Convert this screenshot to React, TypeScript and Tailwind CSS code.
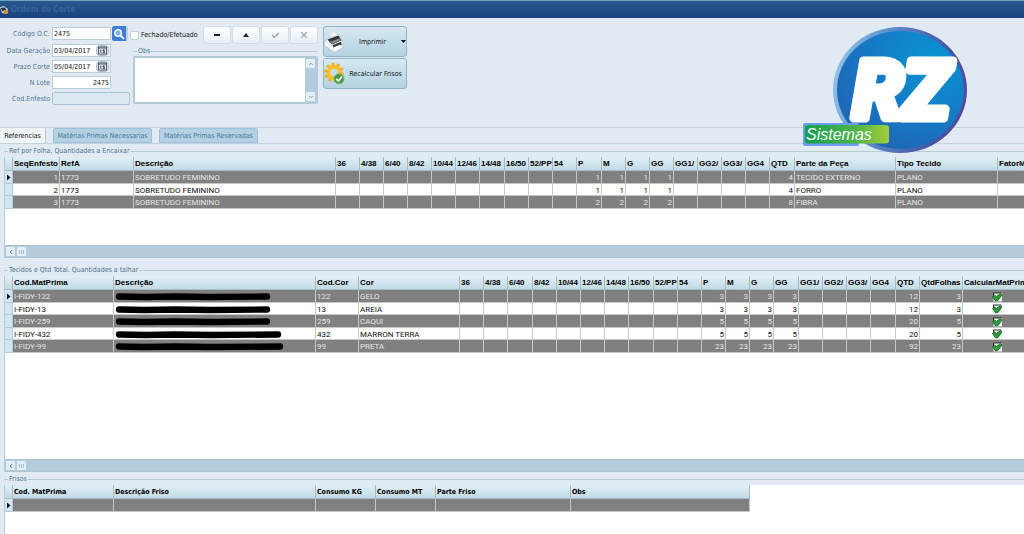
import type { ReactNode } from 'react';
import { Check, ChevronDown, ChevronLeft, ChevronUp, X } from 'lucide-react';

type Column = { label: string; width: number; align?: 'right' | 'center' };
type Cell = ReactNode;

const sizes = ['36', '4/38', '6/40', '8/42', '10/44', '12/46', '14/48', '16/50', '52/PP', '54'];
const letterSizes = ['P', 'M', 'G', 'GG', 'GG1/', 'GG2/', 'GG3/', 'GG4'];

const sizeColumns = (wide: string[]): Column[] =>
  [...sizes, ...letterSizes].map((label) => ({
    label,
    width: wide.includes(label) ? 25 : 24,
    align: 'right',
  }));

const refColumns: Column[] = [
  { label: 'SeqEnfesto', width: 47, align: 'right' },
  { label: 'RefA', width: 74 },
  { label: 'Descrição', width: 202 },
  ...sizeColumns(['14/48', 'P']),
  { label: 'QTD', width: 25, align: 'right' },
  { label: 'Parte da Peça', width: 101 },
  { label: 'Tipo Tecido', width: 102 },
  { label: 'FatorM', width: 70 },
];

const fabricColumns: Column[] = [
  { label: 'Cod.MatPrima', width: 101 },
  { label: 'Descrição', width: 202 },
  { label: 'Cod.Cor', width: 43 },
  { label: 'Cor', width: 101 },
  ...sizeColumns(['6/40', '16/50', 'GG', 'GG4']),
  { label: 'QTD', width: 24, align: 'right' },
  { label: 'QtdFolhas', width: 43, align: 'right' },
  { label: 'CalcularMatPrim', width: 70, align: 'center' },
];

const friezeColumns: Column[] = [
  { label: 'Cod. MatPrima', width: 101 },
  { label: 'Descrição Friso', width: 202 },
  { label: 'Consumo KG', width: 60 },
  { label: 'Consumo MT', width: 60 },
  { label: 'Parte Friso', width: 135 },
  { label: 'Obs', width: 179 },
];

const blank = (n: number): Cell[] => Array(n).fill('');

const refRows: Cell[][] = [
  ['1', '1773', 'SOBRETUDO FEMININO', ...blank(10), '1', '1', '1', '1', ...blank(4), '4', 'TECIDO EXTERNO', 'PLANO', ''],
  ['2', '1773', 'SOBRETUDO FEMININO', ...blank(10), '1', '1', '1', '1', ...blank(4), '4', 'FORRO', 'PLANO', ''],
  ['3', '1773', 'SOBRETUDO FEMININO', ...blank(10), '2', '2', '2', '2', ...blank(4), '8', 'FIBRA', 'PLANO', ''],
];

const fabrics = [
  { code: 'I-FIDY-122', bar: 156, colorCode: '122', color: 'GELO', each: '3', total: '12' },
  { code: 'I-FIDY-13', bar: 156, colorCode: '13', color: 'AREIA', each: '3', total: '12' },
  { code: 'I-FIDY-259', bar: 156, colorCode: '259', color: 'CAQUI', each: '5', total: '20' },
  { code: 'I-FIDY-432', bar: 167, colorCode: '432', color: 'MARRON TERRA', each: '5', total: '20' },
  { code: 'I-FIDY-99', bar: 169, colorCode: '99', color: 'PRETA', each: '23', total: '92' },
];

function Redaction({ width }: { width: number }) {
  const end = width - 4;
  return (
    <svg width={width} height="9" className="block" aria-hidden="true">
      <path
        d={`M4 4.5 L30 5 L60 4.5 L95 5 L${end} 4.5`}
        fill="none"
        stroke="#000"
        strokeWidth="6.4"
        strokeLinecap="round"
      />
    </svg>
  );
}

function GreenCheck() {
  return (
    <svg width="11" height="10" viewBox="0 0 11 10" className="mx-auto block" aria-hidden="true">
      <path d="M1.5 1h8.500v8.500h-8.500z" fill="#e9f2e9" />
      <path d="M1 1h8.500M1.500 1v4" stroke="#333" />
      <path d="M0.500 4.500 2.600 3 4.400 4.400 8.400 1.600 10 3 6 8.400 3.600 9z" fill="#2f9a3c" stroke="#14601e" strokeWidth="0.8" />
    </svg>
  );
}

const fabricRows: Cell[][] = fabrics.map((f) => [
  f.code,
  <Redaction key="bar" width={f.bar} />,
  f.colorCode,
  f.color,
  ...blank(10),
  f.each,
  f.each,
  f.each,
  f.each,
  ...blank(4),
  f.total,
  f.each,
  <GreenCheck key="check" />,
]);

const alignClass = { left: '', right: 'text-right', center: 'text-center' };

type GridProps = { columns: Column[]; rows: Cell[][]; heading?: string };

function Grid({ columns, rows, heading = 'font-["Liberation_Sans",sans-serif] text-[8px]' }: GridProps) {
  const total = columns.reduce((sum, c) => sum + c.width, 8);

  return (
    <table className="table-fixed border-collapse" style={{ width: total }}>
      <colgroup>
        <col style={{ width: 8 }} />
        {columns.map((c) => (
          <col key={c.label} style={{ width: c.width }} />
        ))}
      </colgroup>
      <thead>
        <tr className={`h-[14px] bg-linear-to-b from-[#e0eff5] to-[#c0d9e4] leading-[12px] text-black ${heading}`}>
          <th className="p-0 shadow-[inset_-1px_-1px_#a5bcc8]" />
          {columns.map((c) => (
            <th
              key={c.label}
              className="overflow-hidden whitespace-nowrap p-0 pl-px text-left font-bold shadow-[inset_-1px_-1px_#a5bcc8]"
            >
              {c.label}
            </th>
          ))}
        </tr>
      </thead>
      <tbody className="font-[Roboto,sans-serif] text-[8px] leading-[11px]">
        {rows.map((row, i) => (
          <tr
            key={i}
            className="h-[12px] odd:h-[13px] odd:bg-[#808080] odd:text-[#e4e4e4] even:bg-white even:text-[#111]"
          >
            <td className="bg-[#d3e5ee] p-0 shadow-[inset_-1px_-1px_#b4cad5]">
              {i === 0 && (
                <svg width="7" height="7" viewBox="0 0 7 7" className="block" aria-hidden="true">
                  <path d="M2 0.5 5.5 3.5 2 6.5z" fill="#0a1a2c" />
                </svg>
              )}
            </td>
            {row.map((cell, j) => (
              <td
                key={j}
                className={`overflow-hidden whitespace-nowrap p-0 px-px pr-[2px] shadow-[inset_-1px_-1px_#c8c8c8] ${alignClass[columns[j].align ?? 'left']}`}
              >
                {cell}
              </td>
            ))}
          </tr>
        ))}
      </tbody>
    </table>
  );
}

function HorizontalScroll() {
  return (
    <div className="flex h-[13px] items-center border-y border-[#a9c3d2] bg-[#b3cbdc]">
      <button aria-label="Rolar para a esquerda" className="flex h-[11px] w-[11px] items-center justify-center rounded-xs border border-[#b5cddb] bg-[#e2eff6] text-[#466a85]">
        <ChevronLeft size={6} strokeWidth={4} />
      </button>
      <button aria-label="Barra de rolagem" className="flex h-[11px] w-[11px] items-center justify-center gap-px rounded-xs border border-[#b5cddb] bg-[#e2eff6]">
        <span className="h-1 w-px bg-[#a9bfcd]" />
        <span className="h-1 w-px bg-[#a9bfcd]" />
        <span className="h-1 w-px bg-[#a9bfcd]" />
      </button>
    </div>
  );
}

function Group({ title, className, children }: { title: string; className?: string; children: ReactNode }) {
  return (
    <section className={`flex flex-col pl-1 ${className ?? ''}`}>
      <div className="flex h-3 items-center gap-px text-[#4f7394]">
        <span className="h-px w-1 bg-[#b5cbd8]" />
        <h2 className="leading-[12px]">{title}</h2>
        <span className="h-px flex-1 bg-[#b5cbd8]" />
      </div>
      <div className="flex flex-1 flex-col overflow-hidden border-l border-[#b5cbd8] bg-white">{children}</div>
    </section>
  );
}

function CalendarIcon() {
  return (
    <svg width="13" height="11" viewBox="0 0 13 11" aria-hidden="true">
      <rect x="0.5" y="0.5" width="12" height="10" rx="3" fill="#dce6ef" stroke="#aabbca" />
      <rect x="2.5" y="2" width="8" height="7" fill="#f4f4f8" stroke="#50586e" />
      <path d="M3 2.5h7.5v1H3z" fill="#50586e" />
      <path d="M4.8 4.5v3.5M9 4.8H7v1.4h1.6v1.4H6.8" fill="none" stroke="#2d3448" strokeWidth="0.9" />
    </svg>
  );
}

function PrinterIcon() {
  return (
    <svg width="20" height="22" viewBox="0 0 20 22" aria-hidden="true">
      <path d="M5 3.500 11 0.800 14.500 5 8 8.500z" fill="#fafafa" stroke="#c4c9cc" strokeWidth="0.6" />
      <path d="M0.800 10.500 4 7.500 15 3.500 19.300 12 18.800 17 10.500 21.500 1.500 15z" fill="#eceeef" stroke="#b4b9bc" strokeWidth="0.6" />
      <path d="M3.500 8.500 14.500 4.500 17.500 9.500 8 13.500z" fill="#303334" />
      <path d="M6 10.800 15.500 7.200 16.800 9.400 8.200 12.800z" fill="#85898b" />
      <path d="M8.500 14.300 17 10.800 17.800 13.800 10 17.300z" fill="#3b3e3f" />
      <path d="M9.500 16.500 16 13.800 17.600 16.800 11.500 20z" fill="#fff" />
      <path d="M1 11 7 14 9.500 20 1.500 14.500z" fill="#fbfbfb" />
    </svg>
  );
}

function GearIcon() {
  return (
    <svg width="21" height="23" viewBox="0 0 21 23" aria-hidden="true">
      <circle cx="10" cy="10.5" r="8.3" fill="none" stroke="#f4a91c" strokeWidth="3" strokeDasharray="2.9 2.31" />
      <circle cx="10" cy="10.5" r="5.7" fill="none" stroke="#fbbd29" strokeWidth="4" />
      <circle cx="15" cy="16.8" r="5.2" fill="#4c9a42" stroke="#8fc383" strokeWidth="0.8" />
      <path d="M12.2 16.8 14.4 19 18 14.5" fill="none" stroke="#fff" strokeWidth="1.7" />
    </svg>
  );
}

function Logo() {
  return (
    <svg width="166" height="128" viewBox="0 0 166 128" className="absolute top-[26px] right-[56px]" role="img" aria-label="RZ Sistemas">
      <defs>
        <linearGradient id="ring" x1="0" y1="0.4" x2="1" y2="0.6">
          <stop offset="0" stopColor="#8dc3ea" />
          <stop offset="0.35" stopColor="#5b8cc9" />
          <stop offset="0.8" stopColor="#4753a6" />
          <stop offset="1" stopColor="#54489b" />
        </linearGradient>
        <radialGradient id="disc" cx="0.75" cy="0.25" r="0.8">
          <stop offset="0" stopColor="#0a93d4" />
          <stop offset="0.5" stopColor="#127fc8" />
          <stop offset="1" stopColor="#1f68b8" />
        </radialGradient>
        <linearGradient id="badge">
          <stop offset="0" stopColor="#12a04f" />
          <stop offset="0.6" stopColor="#4db548" />
          <stop offset="1" stopColor="#a3cd3c" />
        </linearGradient>
      </defs>
      <ellipse cx="98" cy="64" rx="67" ry="63" fill="url(#ring)" />
      <ellipse cx="98.5" cy="64" rx="63.5" ry="59" fill="url(#disc)" />
      <text
        x="51"
        y="92"
        fill="#fff"
        stroke="#fff"
        strokeWidth="9"
        strokeLinejoin="round"
        fontSize="80"
        fontStyle="italic"
        fontWeight="700"
        fontFamily="Roboto, sans-serif"
      >
        RZ
      </text>
      <rect x="1" y="97" width="56" height="23" rx="2" fill="#6b9cf0" />
      <rect x="3" y="99" width="84" height="18.5" rx="3" fill="url(#badge)" />
      <text x="4" y="114" fill="#fff" fontSize="16" fontStyle="italic" fontFamily='"Liberation Sans", sans-serif'>
        Sistemas
      </text>
    </svg>
  );
}

const fieldClass = 'h-[13px] border border-[#b8cedb] bg-white px-px text-[#111] outline-none';
const actionClass =
  'flex h-[31px] items-center rounded-[3px] border border-[#8fb4c9] bg-linear-to-b from-[#d8e9f2] via-[#c3dcea] to-[#b4d4e4] text-[#111]';
const navClass =
  'flex h-[18px] w-7 items-center justify-center rounded-[3px] border border-[#cfdde7] bg-linear-to-b from-white to-[#e6eff6]';

function OrderForm() {
  return (
    <div className="grid grid-cols-[42px_auto] items-center gap-x-[2px] gap-y-[3px] text-right text-[#4f7394]">
      <label htmlFor="codigo" className="whitespace-nowrap">Código O.C.</label>
      <div className="flex items-center gap-px">
        <input id="codigo" defaultValue="2475" className={`${fieldClass} w-[59px]`} />
        <button aria-label="Pesquisar" className="flex h-[15px] w-[16px] items-center justify-center rounded-xs border-r-2 border-[#bcd0dd] bg-[#3d7fd4]">
          <svg width="12" height="12" viewBox="0 0 11 11" aria-hidden="true">
            <circle cx="4.7" cy="4.5" r="3" fill="#7db4f0" stroke="#fff" strokeWidth="1.3" />
            <path d="M7 7 10 10" stroke="#fff" strokeWidth="1.6" />
          </svg>
        </button>
      </div>

      <label htmlFor="data" className="justify-self-end whitespace-nowrap">Data Geração</label>
      <div className={`${fieldClass} flex w-[59px] items-center`}>
        <input id="data" defaultValue="03/04/2017" className="w-full min-w-0 outline-none" />
        <button aria-label="Abrir calendário da geração"><CalendarIcon /></button>
      </div>

      <label htmlFor="prazo">Prazo Corte</label>
      <div className={`${fieldClass} flex w-[59px] items-center`}>
        <input id="prazo" defaultValue="05/04/2017" className="w-full min-w-0 outline-none" />
        <button aria-label="Abrir calendário do prazo"><CalendarIcon /></button>
      </div>

      <label htmlFor="lote">N Lote</label>
      <input id="lote" defaultValue="2475" className={`${fieldClass} w-[59px] text-right`} />

      <label htmlFor="enfesto">Cod.Enfesto</label>
      <input id="enfesto" disabled className="h-[13px] w-[78px] rounded-xs border border-[#a9c3d3] bg-[#dce8f1]" />
    </div>
  );
}

function OrderNotes() {
  return (
    <div className="flex w-[188px] flex-col">
      <div className="flex items-center justify-between">
        <label className="flex items-center gap-[2px] text-[#111]">
          <input type="checkbox" className="h-[9px] w-[9px] appearance-none rounded-xs border border-[#c2d2dd] bg-white" />
          Fechado/Efetuado
        </label>
        <div className="flex gap-px">
          <button aria-label="Excluir" className={navClass}><span className="h-[2px] w-[6px] bg-[#1b2430]" /></button>
          <button aria-label="Editar" className={navClass}>
            <svg width="6" height="4" aria-hidden="true"><path d="M0 4 3 0 6 4z" fill="#1b2430" /></svg>
          </button>
          <button aria-label="Confirmar" className={`${navClass} text-[#a3acb5]`}><Check size={9} strokeWidth={4} /></button>
          <button aria-label="Cancelar" className={`${navClass} text-[#a3acb5]`}><X size={10} strokeWidth={3} /></button>
        </div>
      </div>
      <div className="mt-[2px] ml-[3px] flex flex-col">
        <div className="flex h-[10px] items-center gap-px text-[#4f7394]">
          <span className="h-px w-1 bg-[#b5cbd8]" />
          <label htmlFor="obs">Obs</label>
          <span className="h-px flex-1 bg-[#b5cbd8]" />
        </div>
        <div className="flex h-[48px] rounded-xs border-2 border-[#b3cad8] bg-white">
          <textarea id="obs" className="min-w-0 flex-1 resize-none outline-none" />
          <div className="flex w-[11px] flex-col justify-between bg-[#b3cbdc] text-[#5a7f9a]">
            <button aria-label="Subir" className="flex h-[11px] items-center justify-center rounded-xs border border-[#b5cddb] bg-[#e2eff6]">
              <ChevronUp size={6} strokeWidth={3} />
            </button>
            <button aria-label="Descer" className="flex h-[11px] items-center justify-center rounded-xs border border-[#b5cddb] bg-[#e2eff6]">
              <ChevronDown size={6} strokeWidth={3} />
            </button>
          </div>
        </div>
      </div>
    </div>
  );
}

const tabs = ['Referencias', 'Matérias Primas Necessarias', 'Matérias Primas Reservadas'];

export default function App() {
  return (
    <div className='relative flex min-h-screen flex-col overflow-hidden bg-[#e1eaf2] font-["DejaVu_Sans_Condensed","DejaVu_Sans",sans-serif] text-[7px] leading-[10px]'>
      <header className="flex h-[18px] items-center gap-[2px] border-t border-[#6fa3bd] bg-linear-to-b from-[#28598f] to-[#1b4180]">
        <svg width="9" height="10" viewBox="0 0 9 10" aria-hidden="true">
          <path d="M0 2 4 1 8 4 7 9 2 8z" fill="#b9c3cc" />
          <path d="M1 3 5 2.5 6 5 2 6z" fill="#2d3137" />
          <circle cx="6" cy="7" r="2.2" fill="#d98b3a" />
        </svg>
        <h1 className="text-[8px] font-bold text-[#39639a]">Ordem de Corte</h1>
      </header>

      <div className="flex h-[109px] items-start pt-2 pl-2">
        <OrderForm />
        <OrderNotes />
        <div className="ml-[5px] flex w-[84px] flex-col gap-px">
          <button className={actionClass}>
            <PrinterIcon />
            <span className="flex-1 text-center">Imprimir</span>
            <svg width="5" height="3" aria-hidden="true"><path d="M0 0h5L2.5 3z" fill="#111" /></svg>
          </button>
          <button className={actionClass}>
            <GearIcon />
            <span className="flex-1 whitespace-nowrap text-center">Recalcular Frisos</span>
          </button>
        </div>
      </div>

      <nav role="tablist" className="flex h-[17px] gap-[7px] border-y border-[#c3d3de]">
        {tabs.map((tab, i) => (
          <button
            key={tab}
            role="tab"
            aria-selected={i === 0}
            className={
              i === 0
                ? 'w-[46px] border-r border-[#b9cbd7] bg-[#f0f5f9] text-[#111]'
                : 'h-[15px] w-[99px] rounded-t-xs border border-[#9fc1d5] bg-[#b3d1e3] whitespace-nowrap text-[#46779b]'
            }
          >
            {tab}
          </button>
        ))}
      </nav>

      <Group title="Ref por Folha. Quantidades a Encaixar" className="mt-px h-[113px]">
        <Grid columns={refColumns} rows={refRows} />
        <div className="mt-auto"><HorizontalScroll /></div>
      </Group>

      <Group title="Tecidos e Qtd Total. Quantidades a talhar" className="mt-[6px] h-[208px]">
        <Grid columns={fabricColumns} rows={fabricRows} />
        <div className="mt-auto"><HorizontalScroll /></div>
      </Group>

      <Group title="Frisos" className="mt-px flex-1">
        <Grid
          columns={friezeColumns}
          rows={[blank(6)]}
          heading='font-["DejaVu_Sans_Condensed","DejaVu_Sans",sans-serif] text-[7px]'
        />
      </Group>

      <Logo />
    </div>
  );
}
